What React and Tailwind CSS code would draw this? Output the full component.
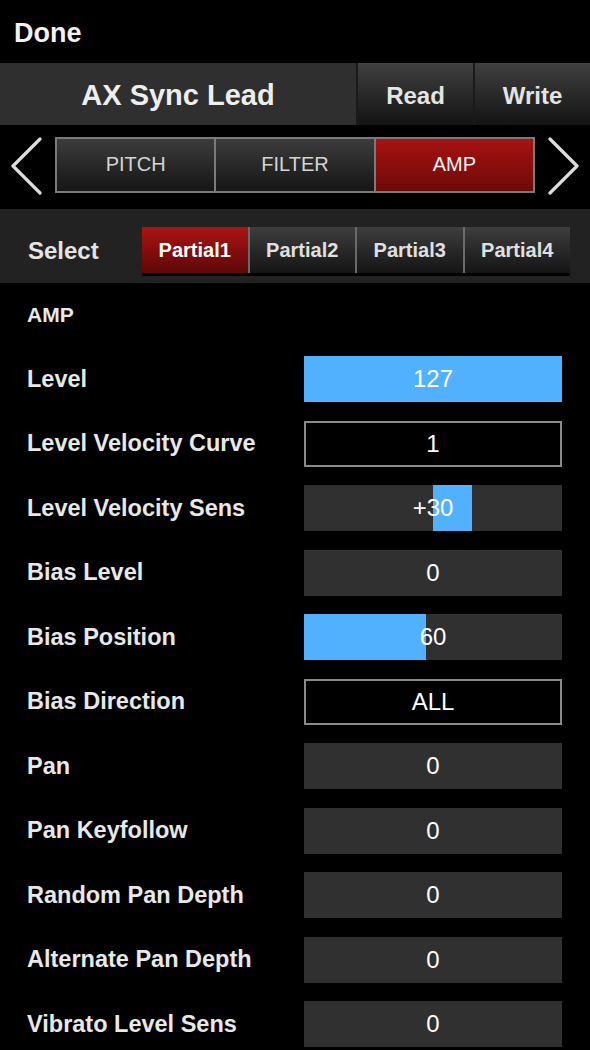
const FONT = { fontFamily: '"Liberation Sans", Arial, sans-serif' };

const TABS = ["PITCH", "FILTER", "AMP"];
const PARTIALS = ["Partial1", "Partial2", "Partial3", "Partial4"];

// kind: bar (fill from left), center (fill from middle), box (bordered), plain
const ROWS = [
  { label: "Level", value: "127", kind: "bar", pct: 100 },
  { label: "Level Velocity Curve", value: "1", kind: "box" },
  { label: "Level Velocity Sens", value: "+30", kind: "center", pct: 15 },
  { label: "Bias Level", value: "0", kind: "plain" },
  { label: "Bias Position", value: "60", kind: "bar", pct: 47.3 },
  { label: "Bias Direction", value: "ALL", kind: "box" },
  { label: "Pan", value: "0", kind: "plain" },
  { label: "Pan Keyfollow", value: "0", kind: "plain" },
  { label: "Random Pan Depth", value: "0", kind: "plain" },
  { label: "Alternate Pan Depth", value: "0", kind: "plain" },
  { label: "Vibrato Level Sens", value: "0", kind: "plain" },
];

function Chevron({ dir }) {
  const d = dir === "left" ? "M30 2 L3 29 L30 56" : "M3 2 L30 29 L3 56";
  return (
    <svg width="33" height="58" viewBox="0 0 33 58" className="shrink-0">
      <path d={d} fill="none" stroke="#dcdcdc" strokeWidth="3.2" strokeLinecap="round" strokeLinejoin="round" />
    </svg>
  );
}

function Control({ row }) {
  if (row.kind === "box") {
    return (
      <div className="w-[258px] h-[46px] border-2 border-[#8a8a8a] bg-black flex items-center justify-center text-[24px] text-white">
        {row.value}
      </div>
    );
  }
  return (
    <div className="relative w-[258px] h-[46px] bg-[#303030] flex items-center justify-center text-[24px] text-white overflow-hidden">
      {row.kind === "bar" && (
        <div className="absolute left-0 top-0 bottom-0 bg-[#51b1ff]" style={{ width: `${row.pct}%` }} />
      )}
      {row.kind === "center" && (
        <div className="absolute left-1/2 top-0 bottom-0 bg-[#51b1ff]" style={{ width: `${row.pct}%` }} />
      )}
      <span className="relative">{row.value}</span>
    </div>
  );
}

export default function App() {
  return (
    <div className="w-[590px] h-[1050px] bg-black text-white overflow-hidden" style={FONT}>
      <div className="h-[63px] flex items-center pl-[14px] pt-[4px] text-[27px] font-bold text-[#f2f2f2]">Done</div>

      <div className="h-[62px] flex bg-[#2f2f2f]">
        <div className="flex-1 flex items-center justify-center pt-[3px] text-[29px] font-bold text-[#eeeeee]">AX Sync Lead</div>
        {["Read", "Write"].map(n => (
          <div
            key={n}
            className="w-[117px] flex items-center justify-center pt-[3px] border-l-2 border-[#1a1a1a] bg-gradient-to-b from-[#404040] to-[#141414] text-[24px] font-bold text-[#e4e4e4]"
          >
            {n}
          </div>
        ))}
      </div>

      <div className="h-[84px] flex items-start justify-between px-[10px] pt-[12px]">
        <Chevron dir="left" />
        <div className="flex h-[56px] w-[480px] border-2 border-[#7a7a7a] bg-[#7a7a7a] gap-[2px]">
          {TABS.map(t => (
            <div
              key={t}
              className={`flex-1 flex items-center justify-center pb-[2px] text-[20px] ${
                t === "AMP"
                  ? "bg-gradient-to-b from-[#a81212] to-[#6e0a0a] text-[#f2f2f2]"
                  : "bg-gradient-to-b from-[#3c3c3c] to-[#161616] text-[#d4d4d4]"
              }`}
            >
              {t}
            </div>
          ))}
        </div>
        <Chevron dir="right" />
      </div>

      <div className="h-[74px] bg-[#222222] flex items-start pl-[28px] pr-[20px] pt-[18px]">
        <div className="w-[114px] h-[46px] flex items-center pt-[2px] text-[24px] font-bold text-[#e4e4e4]">Select</div>
        <div className="flex h-[46px] w-[428px] shadow-[0_3px_0_#000] gap-[2px] bg-[#6a6a6a]">
          {PARTIALS.map((p, i) => (
            <div
              key={p}
              className={`flex-1 flex items-center justify-center text-[20px] font-bold ${
                i === 0
                  ? "bg-gradient-to-b from-[#ad1414] to-[#5e0808] text-white"
                  : "bg-gradient-to-b from-[#3e3e3e] to-[#151515] text-[#e0e0e0]"
              }`}
            >
              {p}
            </div>
          ))}
        </div>
      </div>

      <div className="h-[64px] flex items-center pl-[27px] text-[21px] font-bold text-[#e8e8e8]">AMP</div>

      <div className="flex flex-col">
        {ROWS.map(r => (
          <div key={r.label} className="h-[64.5px] flex items-center justify-between pl-[27px] pr-[28px]">
            <div className="text-[23.5px] font-bold text-[#e8e8e8]">{r.label}</div>
            <Control row={r} />
          </div>
        ))}
      </div>
    </div>
  );
}
